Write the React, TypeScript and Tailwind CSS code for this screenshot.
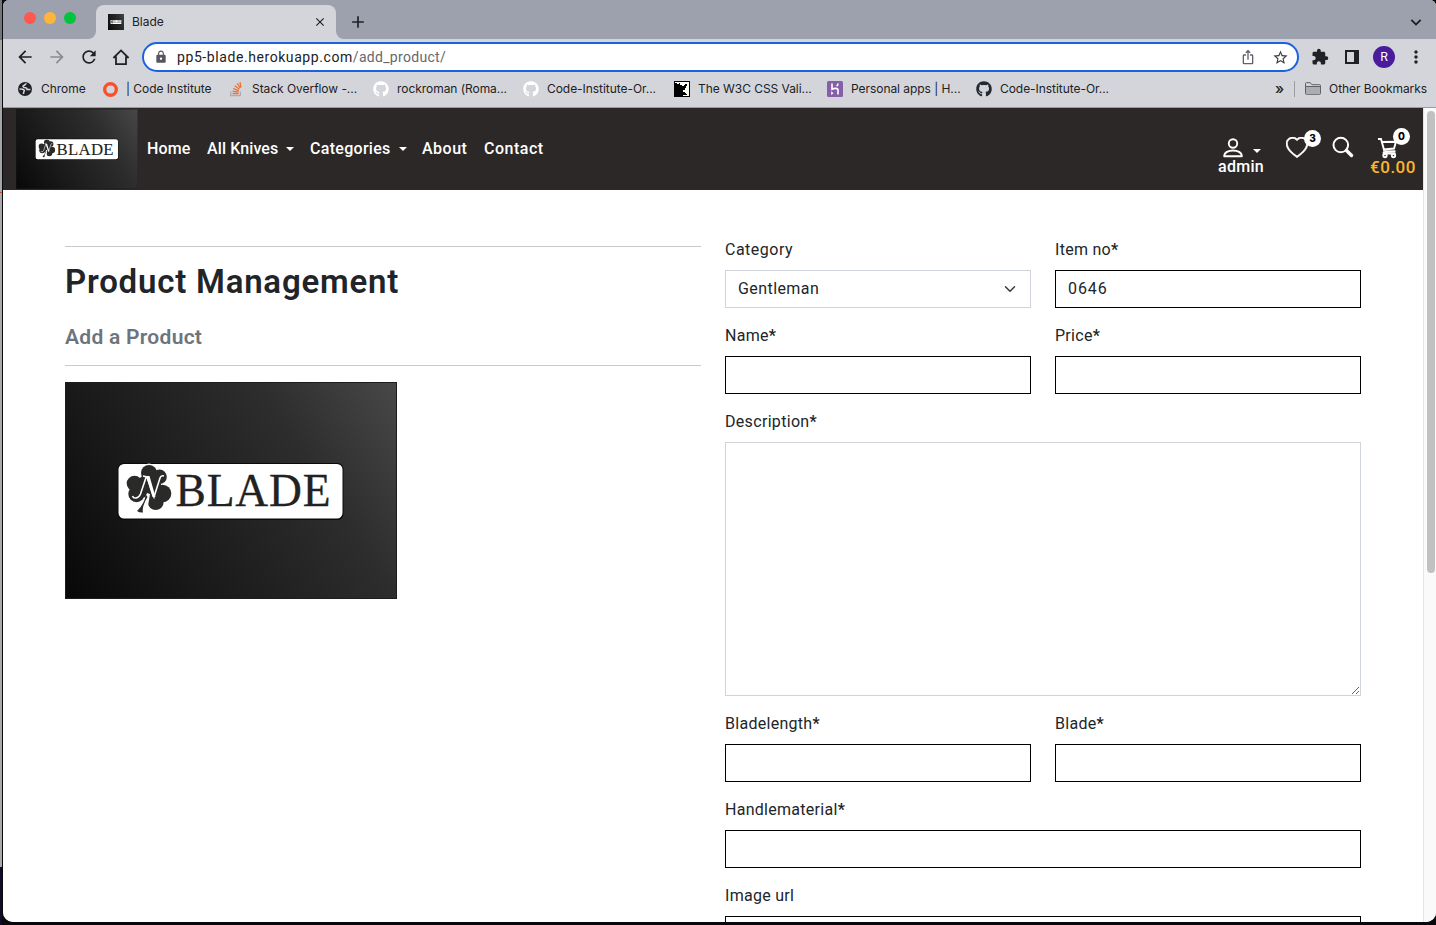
import React from "react";
import {
  MdAdd, MdArrowBack, MdArrowForward, MdClose, MdExtension, MdIosShare,
  MdLock, MdMoreVert, MdRefresh, MdStarBorder,
} from "react-icons/md";
import { FaGithub } from "react-icons/fa";
import { BsHeart } from "react-icons/bs";

function BladeLogo({ id, className }: { id: string; className: string }) {
  return (
    <svg viewBox="0 0 332 217" preserveAspectRatio="none" className={className}>
      <defs>
        <linearGradient id={id} gradientUnits="userSpaceOnUse" x1="0" y1="217" x2="332" y2="0">
          <stop offset="0" stopColor="#080808" />
          <stop offset="0.3" stopColor="#191919" />
          <stop offset="0.7" stopColor="#2d2d2d" />
          <stop offset="1" stopColor="#484848" />
        </linearGradient>
      </defs>
      <rect width="332" height="217" fill={`url(#${id})`} />
      <rect x="0.5" y="0.5" width="331" height="216" fill="none" stroke="#1d1d1d" />
      <rect x="52.5" y="81" width="226" height="57" rx="6" fill="#0a0a0a" />
      <rect x="53.5" y="82" width="224" height="54.5" rx="5.5" fill="#fff" />
      <g fill="#2a2a29">
        <circle cx="84" cy="90.5" r="9" fill="#fff" />
        <circle cx="84" cy="91" r="8" />
        <circle cx="94.5" cy="94.8" r="7.3" />
        <circle cx="69.5" cy="101.5" r="7.8" />
        <circle cx="71.5" cy="112" r="8.2" />
        <circle cx="97.5" cy="111.5" r="8.8" />
        <circle cx="90.7" cy="120" r="8" />
        <circle cx="84" cy="104" r="12" />
      </g>
      <path d="M79 119l3-8 3 1-2 12-4 3z" fill="#fff" />
      <path d="M81 113C79 121 76 125 72 129q3 2 6 1.500C77 126 79 121 82.500 115z" fill="#2a2a29" />
      <path d="M67.500 114c1 3 6 3 8-2l6-18M78 94l4 1 7 20 6-19q1-3 4-2" fill="none" stroke="#fff" strokeWidth="1.600" />
      <path d="M81 94h3.500l6 21h-3z" fill="#fff" />
      <text x="110.500" y="124" textLength="155" lengthAdjust="spacing" fontSize="45.500" fill="#222" stroke="#222" strokeWidth="0.300" fontFamily="'Liberation Serif', serif">BLADE</text>
    </svg>
  );
}

function GlobeIcon() {
  return (
    <svg viewBox="0 0 16 16" className="size-4">
      <circle cx="8" cy="8" r="7" fill="#202124" />
      <path d="M9.500 2.500c-1.500.2-1.200 1.700-2.800 2C5.500 4.800 6 6.500 7.300 6.600c2 .1 2.800.6 2.700 1.900h3.400M2.500 8c2 0 4.500-.2 4.800 1.500.2 1.300-1 1.200-.8 3.500" fill="none" stroke="#d4d5db" strokeWidth="1.500" />
    </svg>
  );
}

function HomeIcon() {
  return (
    <svg viewBox="0 0 20 20" className="size-5" fill="none" stroke="currentColor" strokeWidth="1.800">
      <path d="M2.400 11L10 3.400l7.600 7.600M5 9.500v7.600h10V9.500" />
    </svg>
  );
}

function RingIcon() {
  return (
    <svg viewBox="0 0 16 16" className="size-4">
      <circle cx="8.500" cy="8.500" r="5.800" fill="none" stroke="#fb4f2a" strokeWidth="3.400" />
    </svg>
  );
}

function StackIcon() {
  return (
    <svg viewBox="0 0 16 16" className="size-4" fill="none">
      <path d="M2.700 10.500v4.200h9.600v-4.200" stroke="#a9abb0" strokeWidth="1.300" />
      <path d="M4.500 12.600h6M4.600 10.300l6 .7M5.200 7.600l5.600 2M6.700 4.800l4.700 3.500M9.300 2.400l3 4.800M12 1.200l1 5.200" stroke="#ef7030" strokeWidth="1.300" />
    </svg>
  );
}

function PuzzleFavicon() {
  return (
    <svg viewBox="0 0 16 16" className="size-4">
      <rect width="16" height="16" fill="#fffff0" stroke="#000" strokeWidth="2" />
      <path d="M1 2h2v1h2V2h1v2h2v1h2V4h1V3h2v2h-1v2h-1v2H9v2h2v1h1v1h1v1H9v1H1z" />
      <path d="M12 9h2v2h-2z" fill="#fffff0" />
    </svg>
  );
}

function HerokuFavicon() {
  return (
    <svg viewBox="0 0 16 16" className="size-4">
      <rect width="16" height="16" rx="1.500" fill="#8560a8" />
      <path d="M5 2.500v5.700c2-1 6-1.500 6 .8v4.500M11 2.500q0 1.500-1.300 2.700" fill="none" stroke="#fff" strokeWidth="1.600" />
      <path d="M4.200 10.300l2.300 1.900-2.300 1.900z" fill="#fff" />
    </svg>
  );
}

function FolderIcon() {
  return (
    <svg viewBox="0 0 16 16" className="size-4">
      <path d="M.5 12.500v-10q0-.8.800-.8h4l1.600 2h7.800q.8 0 .8.800v8q0 .8-.8.800H1.300q-.8 0-.8-.8z" fill="#d3d4da" stroke="#606164" />
      <path d="M1 6h14v7H1z" fill="#acadb0" />
      <path d="M1 5.500h14" stroke="#606164" />
    </svg>
  );
}

const bookmarks = [
  { label: "Chrome", icon: <GlobeIcon />, width: "w-[85px]" },
  { label: "| Code Institute", icon: <RingIcon />, width: "w-[126px]" },
  { label: "Stack Overflow -...", icon: <StackIcon />, width: "w-[145px]" },
  { label: "rockroman (Roma...", icon: <FaGithub className="size-4 text-white" />, width: "w-[150px]" },
  { label: "Code-Institute-Or...", icon: <FaGithub className="size-4 text-white" />, width: "w-[151px]" },
  { label: "The W3C CSS Vali...", icon: <PuzzleFavicon />, width: "w-[153px]" },
  { label: "Personal apps | H...", icon: <HerokuFavicon />, width: "w-[149px]" },
  { label: "Code-Institute-Or...", icon: <FaGithub className="size-4 text-[#24292f]" />, width: "w-[150px]" },
];

function TabStrip() {
  return (
    <div className="flex h-[39px] bg-[#9da1ad]">
      <div className="flex w-[85px] shrink-0 gap-2 pt-3 pl-[21px]">
        <span className="size-3 rounded-full bg-[#ff5850]" />
        <span className="size-3 rounded-full bg-[#ffb43a]" />
        <span className="size-3 rounded-full bg-[#00c43c]" />
      </div>
      <div className="size-2 self-end bg-[#d4d5db]"><div className="size-2 rounded-br-lg bg-[#9da1ad]" /></div>
      <div className="mt-[5px] flex w-[240px] items-center rounded-t-lg bg-[#d4d5db] pl-3">
        <BladeLogo id="fav" className="size-4" />
        <span className="ml-2 flex-1 text-xs text-[#202124]">Blade</span>
        <MdClose className="mr-[9px] size-[14px] text-[#202124]" />
      </div>
      <div className="size-2 self-end bg-[#d4d5db]"><div className="size-2 rounded-bl-lg bg-[#9da1ad]" /></div>
      <MdAdd className="mt-3 ml-1 size-5 text-[#202124]" />
      <svg viewBox="0 0 18 18" className="mt-[13px] mr-[11px] ml-auto size-[18px]" fill="none" stroke="#202124" strokeWidth="1.800">
        <path d="M4.300 6.800L9 11.500l4.700-4.700" />
      </svg>
    </div>
  );
}

function Toolbar() {
  return (
    <div className="flex h-9 items-center text-[#202124]">
      <div className="flex w-[139px] shrink-0 gap-3 pl-3">
        <MdArrowBack className="size-5" />
        <MdArrowForward className="size-5 text-[#8a8b90]" />
        <MdRefresh className="size-5" />
        <HomeIcon />
      </div>
      <div className="flex h-[30px] w-[1157px] shrink-0 items-center rounded-full border-2 border-[#1a62e0] bg-white pr-2">
        <MdLock className="ml-2.5 size-[14px] text-[#54575c]" />
        <span className="ml-[9px] flex-1 font-[Roboto,sans-serif] text-[14px] text-[#202124]">
          <span className="tracking-[0.58px]">pp5-blade.herokuapp.com</span>
          <span className="tracking-[0.3px] text-[#65686c]">/add_product/</span>
        </span>
        <MdIosShare className="mr-4 size-4 text-[#5f6368]" />
        <MdStarBorder className="size-[17px] text-[#3c4043]" />
      </div>
      <MdExtension className="ml-3 size-[18px]" />
      <svg viewBox="0 0 14 14" className="ml-4 size-[14px]">
        <path d="M1 1h12v12H1z" fill="none" stroke="#202124" strokeWidth="2" />
        <path d="M9 1h4v12H9z" fill="#202124" />
      </svg>
      <span className="ml-[14px] flex size-[22px] items-center justify-center rounded-full bg-[#4a1c9b] text-[12px] text-white">R</span>
      <MdMoreVert className="ml-[11px] size-5" />
    </div>
  );
}

function BookmarksBar() {
  return (
    <div className="flex h-8 items-center pb-1 pl-[14px] text-xs tracking-[-0.05px] text-[#202124]">
      {bookmarks.map((b, i) => (
        <div key={i} className={`flex shrink-0 items-center gap-2 whitespace-nowrap ${b.width}`}>
          <span className="flex size-4 shrink-0 items-center justify-center">{b.icon}</span>
          <span>{b.label}</span>
        </div>
      ))}
      <span className="ml-[149px] w-[19px] text-[15px] font-medium">»</span>
      <span className="mr-2.5 h-4 w-px bg-[#9c9da2]" />
      <FolderIcon />
      <span className="ml-2 whitespace-nowrap">Other Bookmarks</span>
    </div>
  );
}

function Caret() {
  return <span className="border-x-4 border-t-4 border-x-transparent border-t-white" />;
}

function Badge({ children, className }: { children: string; className: string }) {
  return (
    <span className={`absolute flex size-[17px] items-center justify-center rounded-full bg-white font-[Inter,sans-serif] text-[10px] font-extrabold text-black ${className}`}>
      {children}
    </span>
  );
}

function SiteHeader() {
  return (
    <header className="flex h-[82px] bg-[#2c2827] pl-[13px] text-base font-medium text-white">
      <BladeLogo id="brand" className="mt-px h-20 w-[122px] shrink-0" />
      <nav className="ml-[9px] flex h-[82px] items-center whitespace-nowrap">
        <a className="w-[60px] tracking-[0.1px]">Home</a>
        <a className="flex w-[103px] items-center"><span className="w-[79px] tracking-[0.1px]">All Knives</span><Caret /></a>
        <a className="flex w-[112px] items-center"><span className="w-[89px] tracking-[0.3px]">Categories</span><Caret /></a>
        <a className="w-[62px] tracking-[0.5px]">About</a>
        <a className="tracking-[0.5px]">Contact</a>
      </nav>
      <div className="ml-auto flex pr-[5px]">
        <div className="flex w-[48px] flex-col items-center pt-[30px]">
          <div className="flex h-5 w-9 items-start">
            <svg viewBox="0 0 20 20" className="size-5 shrink-0" fill="none" stroke="currentColor" strokeWidth="1.900">
              <circle cx="10" cy="5.500" r="4.200" />
              <path d="M1.200 18.300c0-7.800 17.600-7.800 17.600 0z" strokeLinejoin="round" />
            </svg>
            <span className="mt-[11px] ml-2.5 flex"><Caret /></span>
          </div>
          <span className="-mt-px leading-5 tracking-[0.3px]">admin</span>
        </div>
        <div className="relative ml-[21px] pt-[29px]">
          <BsHeart className="size-[22px]" stroke="currentColor" strokeWidth={0.5} />
          <Badge className="top-[22px] left-[18px]">3</Badge>
        </div>
        <svg viewBox="0 0 22 22" className="mt-7 ml-[24px] size-[22px]" fill="none" stroke="currentColor">
          <circle cx="8.800" cy="9" r="7.300" strokeWidth="2" />
          <path d="M14.500 14.500l5 5" strokeWidth="3.400" strokeLinecap="round" />
        </svg>
        <div className="relative ml-[14px] flex w-[50px] flex-col items-center pt-[29px]">
          <svg viewBox="0 0 22 22" className="mr-2.5 h-[22px] w-[22px]" fill="none" stroke="currentColor" strokeWidth="1.900">
            <path d="M1 2h3l3.500 12.500M5 5l14-.3-2 6.800-10.500 1M7.500 14.500q-2 2 0 2h11M18.500 14.200l-11 .3" />
            <circle cx="8" cy="18.500" r="1.700" />
            <circle cx="16.500" cy="18.500" r="1.700" />
          </svg>
          <Badge className="top-5 left-[25px]">0</Badge>
          <span className="-mt-0.5 text-[17px] leading-5 tracking-[0.5px] text-[#fdb62c]">€0.00</span>
        </div>
      </div>
    </header>
  );
}

function Field({ label, value, required = true }: { label: string; value?: string; required?: boolean }) {
  return (
    <label className="flex min-w-0 flex-1 flex-col gap-2">
      <span className="h-6 leading-[23px] tracking-[0.28px]">{label}{required && <span className="font-semibold">*</span>}</span>
      <input defaultValue={value} className="h-[38px] w-full border border-black bg-white px-3 pb-0.5 tracking-[0.9px]" />
    </label>
  );
}

function ProductForm() {
  return (
    <form className="flex w-[636px] shrink-0 flex-col gap-4 pt-12">
      <div className="flex gap-6">
        <div className="flex flex-1 flex-col gap-2">
          <span className="h-6 leading-[23px] tracking-[0.5px]">Category</span>
          <div className="flex h-[38px] items-center justify-between border border-[#ced4da] px-3">
            <span className="tracking-[0.42px]">Gentleman</span>
            <svg viewBox="0 0 16 16" className="mr-0.5 size-3" fill="none" stroke="#343a40" strokeWidth="2" strokeLinecap="round" strokeLinejoin="round">
              <path d="M2 5l6 6 6-6" />
            </svg>
          </div>
        </div>
        <Field label="Item no" value="0646" />
      </div>
      <div className="flex gap-6"><Field label="Name" /><Field label="Price" /></div>
      <label className="flex flex-col gap-2">
        <span className="h-6 leading-[23px] tracking-[0.32px]">Description<span className="font-semibold">*</span></span>
        <textarea className="block h-[254px] w-full resize-y border border-[#ced4da]" />
      </label>
      <div className="flex gap-6"><Field label="Bladelength" /><Field label="Blade" /></div>
      <div className="flex"><Field label="Handlematerial" /></div>
      <div className="flex"><Field label="Image url" required={false} /></div>
    </form>
  );
}

export default function App() {
  return (
    <div className="flex h-[925px] w-[1436px] overflow-hidden bg-[#08080d] font-[Inter,sans-serif]">
      <div className="flex w-[2px] shrink-0 flex-col">
        <div className="h-10 bg-[#73757d]" />
        <div className="h-[152px] bg-[#a4a6a8]" />
        <div className="h-px bg-[#c6482a]" />
        <div className="h-[674px] bg-[#a9a9a9]" />
        <div className="flex-1 bg-[#120a2b]" />
      </div>
      <div className="ml-px flex h-[922px] w-[1433px] flex-col overflow-hidden rounded-t-md rounded-b-[10px] bg-[#d4d5db]">
        <TabStrip />
        <Toolbar />
        <BookmarksBar />
        <div className="flex h-[815px] border-t border-[#9a9a9f] bg-white">
          <div className="h-[814px] w-[1420px] overflow-hidden font-[Roboto,sans-serif]">
            <SiteHeader />
            <main className="flex gap-6 pl-[62px] text-base text-[#212529]">
              <section className="w-[636px] shrink-0 pt-14">
                <hr className="border-[#c8c9ca]" />
                <h1 className="mt-4 h-[38px] text-[33px] leading-[38px] font-semibold tracking-[0.78px] whitespace-nowrap">Product Management</h1>
                <h2 className="mt-6 h-6 text-[21px] leading-6 font-semibold tracking-[0.28px] text-[#6c757d]">Add a Product</h2>
                <hr className="mt-4 border-[#c8c9ca]" />
                <BladeLogo id="hero" className="mt-4 h-[217px] w-[332px]" />
              </section>
              <ProductForm />
            </main>
          </div>
          <div className="w-[13px] border-l border-[#e4e4e4] bg-[#fafafa] pt-[3px] pl-[3px]">
            <div className="h-[462px] w-2 rounded-full bg-[#c1c1c1]" />
          </div>
        </div>
      </div>
    </div>
  );
}
